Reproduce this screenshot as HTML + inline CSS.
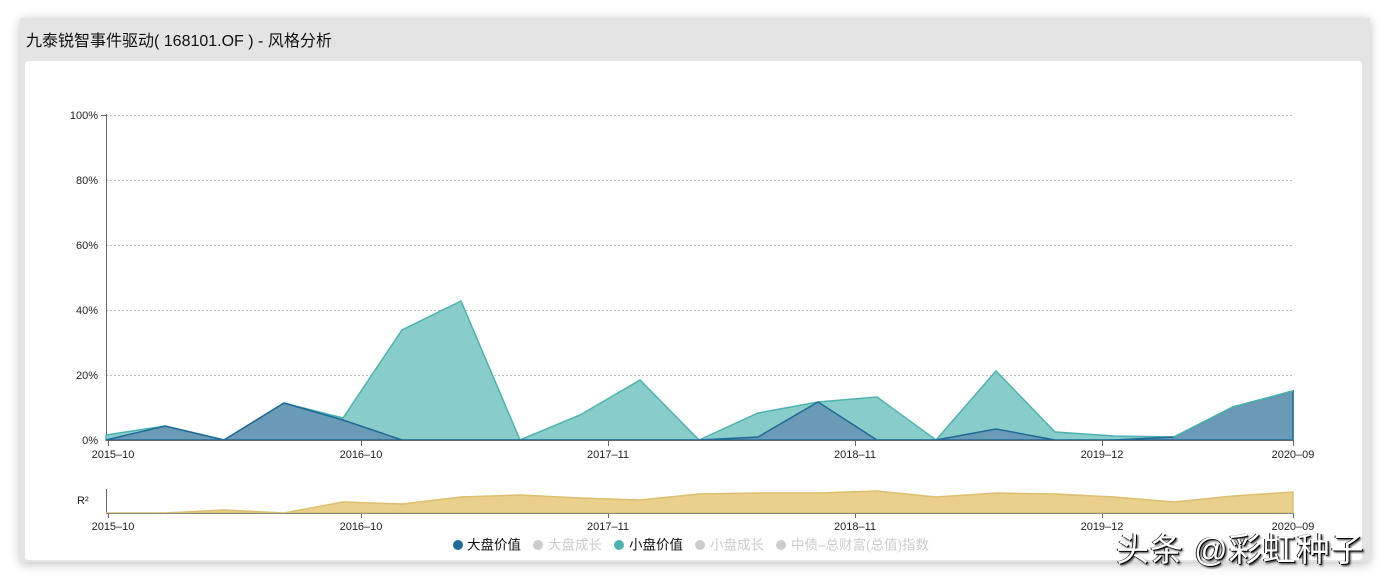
<!DOCTYPE html>
<html><head><meta charset="utf-8"><style>
html,body{margin:0;padding:0;background:#fff;width:1388px;height:579px;overflow:hidden;font-family:"Liberation Sans","Noto Sans CJK SC",sans-serif}
.outer{position:absolute;left:20px;top:18px;width:1350px;height:544px;background:#e4e4e4;box-shadow:0 2px 10px rgba(0,0,0,.25)}
.title{position:absolute;left:26px;top:27px;font-size:16px;color:#111}
.inner{position:absolute;left:25px;top:61px;width:1337px;height:499px;background:#fff;border-radius:3px}
svg{position:absolute;left:0;top:0}
.wm{position:absolute;left:1116px;top:523px;font-size:33px;color:#fff;letter-spacing:1px;text-shadow:1px 1px 0 #000,-1px 0 0 #222,2px 2px 2px #333;font-family:"Liberation Sans","Noto Sans CJK SC",sans-serif}
</style></head><body>
<div class="outer"></div>
<div class="title">九泰锐智事件驱动( 168101.OF ) - 风格分析</div>
<div class="inner"></div>
<svg width="1388" height="579" font-family="Liberation Sans, Noto Sans CJK SC, sans-serif" font-size="11">
<g stroke="#bbb" stroke-dasharray="2,2" stroke-width="1">
<line x1="106" y1="115.5" x2="1293" y2="115.5"/><line x1="106" y1="180.5" x2="1293" y2="180.5"/><line x1="106" y1="245.5" x2="1293" y2="245.5"/><line x1="106" y1="310.5" x2="1293" y2="310.5"/><line x1="106" y1="375.5" x2="1293" y2="375.5"/>
</g>
<g text-anchor="end" fill="#222"><text x="98" y="119">100%</text><text x="98" y="184">80%</text><text x="98" y="249">60%</text><text x="98" y="314">40%</text><text x="98" y="379">20%</text><text x="98" y="444">0%</text></g>
<line x1="106.5" y1="114" x2="106.5" y2="441" stroke="#666"/>
<line x1="101" y1="115.5" x2="106" y2="115.5" stroke="#666"/>
<polygon points="106,435 165,426 224,440 284,403 343,418 402,330 461,301 520,440 580,415 640,380 699,440 758,413 818,402 877,397 936,440 996,371 1055,432 1114,436 1174,437 1233,407 1293,391 1293,440 106,440" fill="#88cdc9" stroke="#4db3b0" stroke-width="1.5"/>
<polygon points="106,440 165,426 224,440 284,403 343,420 402,440 699,440 758,437 818,402 877,440 936,440 996,429 1055,440 1114,440 1174,437 1233,407 1293,391 1293,440 106,440" fill="#6a9ab5" stroke="#1f6a96" stroke-width="1.5"/>
<polyline points="1174,437 1233,407 1293,391" fill="none" stroke="#4db3b0" stroke-width="1.5"/>
<line x1="106" y1="440.5" x2="1294" y2="440.5" stroke="#666"/>
<g stroke="#666"><line x1="108.5" y1="441" x2="108.5" y2="446"/><line x1="361.5" y1="441" x2="361.5" y2="446"/><line x1="608.5" y1="441" x2="608.5" y2="446"/><line x1="855.5" y1="441" x2="855.5" y2="446"/><line x1="1102.5" y1="441" x2="1102.5" y2="446"/><line x1="1293.5" y1="441" x2="1293.5" y2="446"/></g>
<g text-anchor="middle" fill="#222"><text x="113" y="458">2015–10</text><text x="361" y="458">2016–10</text><text x="608" y="458">2017–11</text><text x="855" y="458">2018–11</text><text x="1102" y="458">2019–12</text><text x="1293" y="458">2020–09</text></g>
<text x="77" y="504" fill="#222">R²</text>
<line x1="106.5" y1="489" x2="106.5" y2="514" stroke="#666"/>
<polygon points="106,513 165,513 224,510 284,513 343,502 402,504 461,497 520,495 580,498 640,500 699,494 758,493 818,493 877,491 936,497 996,493 1055,494 1114,497 1174,502 1233,496 1293,492 1293,513 106,513" fill="#e9d08c" stroke="#dcbf6f" stroke-width="1.5"/>
<line x1="106" y1="513.5" x2="1294" y2="513.5" stroke="#888"/>
<g stroke="#666"><line x1="108.5" y1="514" x2="108.5" y2="518"/><line x1="361.5" y1="514" x2="361.5" y2="518"/><line x1="608.5" y1="514" x2="608.5" y2="518"/><line x1="855.5" y1="514" x2="855.5" y2="518"/><line x1="1102.5" y1="514" x2="1102.5" y2="518"/><line x1="1293.5" y1="514" x2="1293.5" y2="518"/></g>
<g text-anchor="middle" fill="#222"><text x="113" y="530">2015–10</text><text x="361" y="530">2016–10</text><text x="608" y="530">2017–11</text><text x="855" y="530">2018–11</text><text x="1102" y="530">2019–12</text><text x="1293" y="530">2020–09</text></g>
<g font-size="13.5">
<circle cx="458" cy="545" r="5" fill="#1f6a96"/><text x="467" y="549.5" fill="#111">大盘价值</text>
<circle cx="538" cy="545" r="5" fill="#ccc"/><text x="548" y="549.5" fill="#ccc">大盘成长</text>
<circle cx="619" cy="545" r="5" fill="#4db3b0"/><text x="629" y="549.5" fill="#111">小盘价值</text>
<circle cx="700" cy="545" r="5" fill="#ccc"/><text x="710" y="549.5" fill="#ccc">小盘成长</text>
<circle cx="781" cy="545" r="5" fill="#ccc"/><text x="791" y="549.5" fill="#ccc">中债–总财富(总值)指数</text>
</g>
</svg>
<div class="wm">头条 @彩虹种子</div>
</body></html>
